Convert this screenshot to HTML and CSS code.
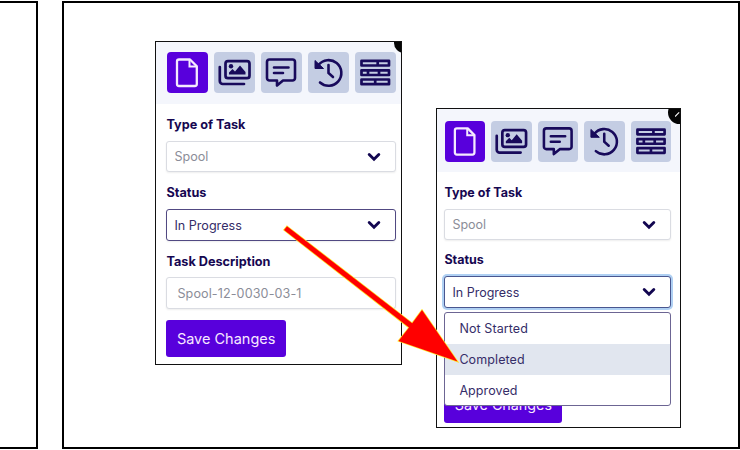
FILE: index.html
```html
<!DOCTYPE html>
<html lang="en">
<head>
<meta charset="utf-8">
<title>Task status</title>
<link rel="stylesheet" href="styles.css">
</head>
<body>
<svg class="defs" width="0" height="0" aria-hidden="true">
  <symbol id="file" viewBox="0 0 41 41"><path d="M12 7.500h11l6.800 6.800v17.700a2 2 0 0 1-2 2H12a2 2 0 0 1-2-2V9.500a2 2 0 0 1 2-2z" fill="none" stroke="currentColor" stroke-width="2.300" stroke-linejoin="round"/><path d="M22.500 7.500v7h7" fill="none" stroke="currentColor" stroke-width="2"/></symbol>
  <symbol id="images" viewBox="0 0 41 41"><g fill="none" stroke="currentColor" stroke-width="2.700" stroke-linecap="round" stroke-linejoin="round"><rect x="11.500" y="9.200" width="24" height="17" rx="2.500"/><path d="M5.800 15v14a3 3 0 0 0 3 3H30"/></g><circle cx="17" cy="14.300" r="2.200" fill="currentColor"/><path d="M15 22.500v-2l3.500-3.500 2.500 2.500 5-6 5.500 6.500v2.500z" fill="currentColor"/></symbol>
  <symbol id="message" viewBox="0 0 41 41"><path d="M8.500 7.500h23A2.500 2.500 0 0 1 34 10v16a2.500 2.500 0 0 1-2.500 2.500H22L16 33.500v-5H8.500A2.500 2.500 0 0 1 6 26V10a2.500 2.500 0 0 1 2.500-2.500zM13 15.500h14.500M13 21h9" fill="none" stroke="currentColor" stroke-width="2.600" stroke-linecap="round" stroke-linejoin="round"/></symbol>
  <symbol id="history" viewBox="0 0 41 41"><g fill="none" stroke="currentColor" stroke-width="2.600" stroke-linecap="round"><path d="M10.500 13a12.800 12.800 0 1 1 1.500 17.500"/><path d="M20.500 13v8l4.500 4"/></g><path d="M7 8.500v8h8.500z" fill="currentColor" stroke="currentColor" stroke-linejoin="round"/></symbol>
  <symbol id="rows" viewBox="0 0 41 41"><path d="M6.500 8.800h27.500v4.700H6.500zM6.500 18.300h27.500V23H6.500zM6.500 27.500h27.500v4.700H6.500zM22.700 8.800v4.700M13 18.300V23M24 18.300V23M20.200 27.500v4.700" fill="none" stroke="currentColor" stroke-width="2.700" stroke-linejoin="round"/></symbol>
  <symbol id="chevron" viewBox="0 0 14 10"><path d="M2.200 2.500 7 7.200l4.800-4.700" fill="none" stroke="currentColor" stroke-width="2.900" stroke-linecap="round"/></symbol>
</svg>
<main class="page">
  <section class="cell cell-left"></section>
  <section class="cell cell-main">
    <article class="panel">
      <span class="close"></span>
      <nav class="tabs">
        <span class="tab active"><svg><use href="#file"/></svg></span>
        <span class="tab"><svg><use href="#images"/></svg></span>
        <span class="tab"><svg><use href="#message"/></svg></span>
        <span class="tab"><svg><use href="#history"/></svg></span>
        <span class="tab"><svg><use href="#rows"/></svg></span>
      </nav>
      <div class="form">
        <div class="label">Type of Task</div>
        <div class="control muted"><span>Spool</span><svg class="chevron"><use href="#chevron"/></svg></div>
        <div class="label">Status</div>
        <div class="control dark"><span>In Progress</span><svg class="chevron"><use href="#chevron"/></svg></div>
        <div class="label label-description">Task Description</div>
        <div class="control muted description"><span>Spool-12-0030-03-1</span></div>
        <div class="save">Save Changes</div>
      </div>
    </article>
    <article class="panel panel-open">
      <span class="close"></span>
      <svg class="close-mark" viewBox="0 0 6 8"><path d="M0 7 5 2" fill="none" stroke="#fff" stroke-width="1.300"/></svg>
      <nav class="tabs">
        <span class="tab active"><svg><use href="#file"/></svg></span>
        <span class="tab"><svg><use href="#images"/></svg></span>
        <span class="tab"><svg><use href="#message"/></svg></span>
        <span class="tab"><svg><use href="#history"/></svg></span>
        <span class="tab"><svg><use href="#rows"/></svg></span>
      </nav>
      <div class="form">
        <div class="label">Type of Task</div>
        <div class="control muted"><span>Spool</span><svg class="chevron"><use href="#chevron"/></svg></div>
        <div class="label">Status</div>
        <div class="control dark focus"><span>In Progress</span><svg class="chevron"><use href="#chevron"/></svg>
          <div class="menu">
            <div class="option">Not Started</div>
            <div class="option selected">Completed</div>
            <div class="option">Approved</div>
          </div>
        </div>
        <div class="save">Save Changes</div>
      </div>
    </article>
    <svg class="arrow" viewBox="0 0 740 450"><path d="M287 226.300 412.200 323.300 422 310l35.500 51.500L398.500 341l10.500-13.400L284 230z" stroke="#ffe52b" stroke-width="1.500"/><path d="M287 226.300 412.200 323.300 422 310l35.500 51.500L398.500 341l10.500-13.400L284 230z" fill="#f00"/></svg>
  </section>
</main>
</body>
</html>
```
FILE: styles.css
```css
* { box-sizing: border-box; }
body { margin: 0; background: #fff; font-family: Inter, sans-serif; color: #1c1056; overflow: hidden; }
.defs { position: absolute; }
.page { display: flex; gap: 24px; width: 740px; height: 450px; padding: 1px 0; position: relative; }
.cell { border: 2px solid #000; }
.cell-left { width: 38px; border-left: 0; }
.cell-main { width: 678px; display: flex; align-items: flex-start; gap: 34px; padding: 38px 0 0 91px; }
.panel { position: relative; width: 247px; height: 324px; border: 1px solid #111; background: #fff; overflow: hidden; }
.tabs { display: flex; gap: 6.100px; height: 62px; padding: 10px 0 0 10.500px; background: #f4f6fc; }
.tab { width: 41px; height: 41px; flex: none; border-radius: 4px; background: #c4cde3; color: #180a5b; }
.tab svg { display: block; width: 100%; height: 100%; }
.tab.active { background: #5800dc; color: #f5eaff; }
.close { position: absolute; z-index: 1; top: -9px; right: -13px; width: 20px; height: 20px; border-radius: 50%; background: #050505; }
.form { padding: 11px 5px 0 10.400px; }
.label { height: 26px; line-height: 20px; font-size: 12.700px; font-weight: 700; color: #160751; }
.label-description { line-height: 22px; }
.control { position: relative; display: flex; align-items: center; justify-content: space-between; width: 229.500px; height: 31px; margin-bottom: 11px; padding: 0 14px 0 7px; border: 1px solid #dadce2; border-radius: 3px; background: #fff; font-size: 12.600px; box-shadow: 0 1px 2px #00000012; }
.muted { color: #8b8d98; }
.dark { height: 32px; margin-bottom: 10px; color: #352d68; border-color: #514982; }
.chevron { width: 14px; height: 10px; color: #120650; }
.description { height: 32px; border-width: 1.500px; padding-left: 10px; letter-spacing: .1px; }
.save { width: 119.500px; height: 36.500px; margin-top: 11px; border-radius: 3px; background: #5800dc; color: #f7e8ff; font-size: 14.500px; line-height: 37px; text-align: center; }
.panel-open { width: 245px; height: 320px; margin-top: 67px; }
.panel-open .tabs { gap: 6.100px; padding: 12px 0 0 7.500px; height: 63px; }
.panel-open .tab { width: 40.500px; height: 40.500px; }
.panel-open .form { padding: 11px 5px 0 7.400px; }
.panel-open .control { width: 227px; }
.panel-open .label, .panel-open .control { font-size: 12.500px; }
.panel-open .close { top: -8px; right: -11px; width: 23px; height: 23px; }
.close-mark { position: absolute; z-index: 2; top: 1px; right: 0; width: 5px; height: 8px; }
.focus { border-color: #49568f; box-shadow: 0 0 0 2px #afd0f3; }
.menu { position: absolute; z-index: 2; left: -1px; top: 34.500px; width: 227px; height: 94.500px; border: 1px solid #6c6593; border-radius: 3px; background: #fff; overflow: hidden; }
.panel-open .label { height: 26px; }
.panel-open .control.muted { margin-bottom: 10px; }
.option { height: 31.200px; padding-left: 14px; line-height: 31px; letter-spacing: .1px; }
.selected { background: #e1e6ef; }
.panel-open .save { width: 118px; margin-top: 78px; font-size: 14.300px; }
.arrow { position: absolute; left: 0; top: 0; width: 740px; height: 450px; z-index: 3; fill: none; }
```
